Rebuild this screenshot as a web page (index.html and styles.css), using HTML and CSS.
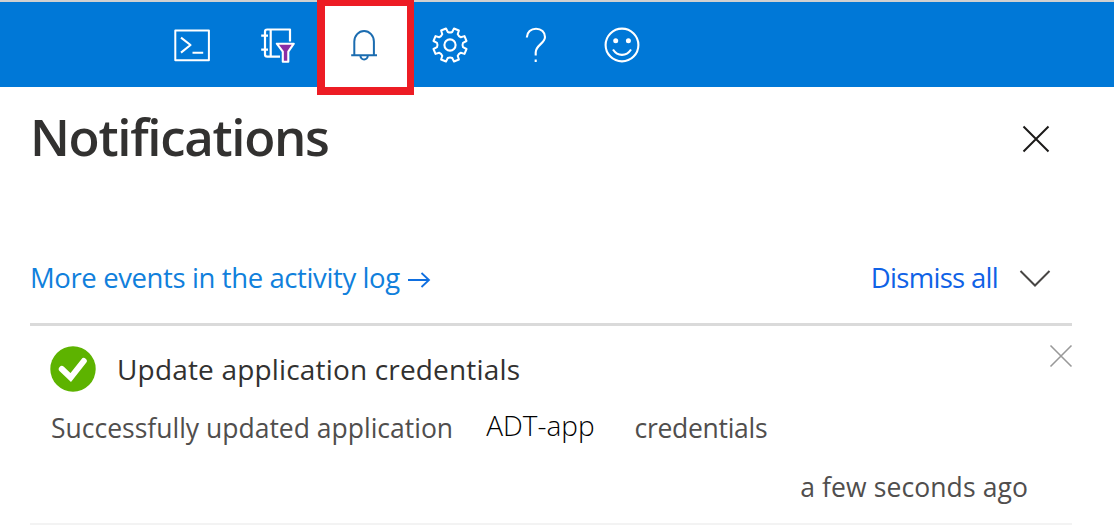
FILE: index.html
```html
<!DOCTYPE html>
<html lang="en">
<head>
<meta charset="utf-8">
<title>Notifications</title>
<link rel="stylesheet" href="styles.css">
</head>
<body>
<header class="topbar">
  <nav class="tools">
    <button class="tool" aria-label="Cloud Shell">
      <svg class="icon" viewBox="-20 -20 40 40"><rect x="-16.7" y="-14.4" width="33.6" height="29.6" stroke-width="2"/><path d="M-11-7.3 -1.5 0 -11 7.6M.5 7.8H11.2" stroke-width="2.1"/></svg>
    </button>
    <button class="tool" aria-label="Directories and subscriptions">
      <svg class="icon" viewBox="-20 -20 40 40"><path d="M12-3.5V-15.5H-10.8Q-13-15.5-13-13.3V9.5Q-13 11.7-10.8 11.7H2M-7.3-15.5V11.7M-16.8-9.3H-10M-16.8 4.6H-10" stroke-width="2.2"/><path class="funnel" d="M-1.2-1.3H15.8L10.3 6.7V16.7H4.8V6.7Z" stroke-width="2.1"/></svg>
    </button>
    <button class="tool tool-active" aria-label="Notifications">
      <svg class="icon" viewBox="-20 -20 40 40"><path d="M-9.7 9.5V-3.5A9.8 10.5 0 0 1 9.9-3.5V9.5M-12.8 10.2H13M-3.6 10.5A3.7 4 0 0 0 3.8 10.5" stroke-width="2"/></svg>
      <span class="highlight"></span>
    </button>
    <button class="tool" aria-label="Settings">
      <svg class="icon" viewBox="-20 -20 40 40"><path d="M-2.2-13 Q0-12 2.2-13L4-16.5 8.9-14.5 7.7-10.8Q8.6-8.6 10.8-7.7L14.5-8.9 16.5-4 13-2.2Q12 0 13 2.2L16.5 4 14.5 8.9 10.8 7.7Q8.6 8.6 7.7 10.8L8.9 14.5 4 16.5 2.2 13Q0 12-2.2 13L-4 16.5-8.9 14.5-7.7 10.8Q-8.6 8.6-10.8 7.7L-14.5 8.9-16.5 4-13 2.2Q-12 0-13-2.2L-16.5-4-14.5-8.9-10.8-7.7Q-8.6-8.6-7.7-10.8L-8.9-14.5-4-16.5Z" stroke-width="2"/><circle r="5.6" stroke-width="2.1"/></svg>
    </button>
    <button class="tool" aria-label="Help">
      <svg class="icon" viewBox="-20 -20 40 40"><path d="M-9.2-7.5C-9-13-5-16.3 0-16.3C5.3-16.3 9-13 9-8C9-1.5-.3 0-.3 7.5V10.5M-.3 14.6V17" stroke-width="2.1"/></svg>
    </button>
    <button class="tool" aria-label="Feedback">
      <svg class="icon" viewBox="-20 -20 40 40"><circle r="16.4" stroke-width="2.1"/><circle class="eye" cx="-6.3" cy="-4.3" r="2.5"/><circle class="eye" cx="6.4" cy="-4.3" r="2.5"/><path d="M-9 4.5Q-5.5 9.9 0 9.9T9 4.5" stroke-width="2.1"/></svg>
    </button>
  </nav>
</header>
<main class="panel">
  <div class="title-row">
    <h1 class="title">Notifications</h1>
    <svg class="close" viewBox="0 0 28 28"><path d="M1.5 1.5 26.5 26.5M26.5 1.5 1.5 26.5"/></svg>
  </div>
  <div class="actions">
    <a class="link">More events in the activity log</a>
    <svg class="arrow" viewBox="0 0 24 18"><path d="M1 9H22M14.5 2 22 9 14.5 16"/></svg>
    <a class="dismiss">Dismiss all</a>
    <svg class="chevron" viewBox="0 0 32 20"><path d="M1.5 2 16 16.5 30.5 2"/></svg>
  </div>
  <article class="item">
    <div class="item-head">
      <svg class="check" viewBox="0 0 46 46"><circle cx="23" cy="23" r="22.7"/><path d="M11.8 23 20.7 31.5 33.8 15"/></svg>
      <h2 class="item-title">Update application credentials</h2>
      <svg class="item-close" viewBox="0 0 24 24"><path d="M1.5 1.5 22.5 22.5M22.5 1.5 1.5 22.5"/></svg>
    </div>
    <p class="message"><span class="msg-start">Successfully updated application</span><span class="app-name">ADT-app</span><span class="msg-end">credentials</span></p>
    <p class="time"><span class="time-text">a few seconds ago</span></p>
  </article>
</main>
</body>
</html>
```
FILE: styles.css
```css
* { box-sizing: border-box; }
body {
  margin: 0;
  height: 525px;
  overflow: hidden;
  background: #fff;
  color: #323130;
  font-family: "Open Sans", "Noto Sans", sans-serif;
  font-size: 27.5px;
}
h1, h2, p { margin: 0; font-weight: 400; white-space: nowrap; }
svg { display: block; fill: none; flex: none; }
.topbar { height: 87px; background: #0078d7; border-top: 2px solid #d0d0d0; }
.tools { display: flex; height: 85px; padding-left: 149px; }
.tool {
  position: relative;
  display: flex;
  align-items: center;
  justify-content: center;
  width: 86px;
  padding: 0;
  border: 0;
  background: none;
  color: #fff;
}
.tool-active { background: #fff; color: #1b6cb0; }
.icon { width: 40px; height: 40px; stroke: currentColor; stroke-linejoin: round; }
.funnel { fill: #8a2da5; }
.eye { fill: #fff; stroke: none; }
.highlight {
  position: absolute;
  left: -4px;
  top: -2px;
  width: 97px;
  height: 95px;
  border: 8px solid #ed1c24;
  border-top-width: 6px;
  border-right-width: 7px;
}
.panel { padding: 0 42px 0 30px; }
.title-row { display: flex; height: 156px; padding: 13px 22px 0 0; justify-content: space-between; }
.title { font-size: 51px; line-height: 72px; font-weight: 600; letter-spacing: -1.33px; }
.close { width: 28px; height: 28px; margin-top: 25px; stroke: #1b1a19; stroke-width: 2; }
.actions { display: flex; align-items: center; height: 83px; padding: 0 21px 11px 0; border-bottom: 3px solid #dadada; }
.link { color: #1080dc; letter-spacing: -0.39px; }
.arrow { width: 24px; height: 18px; margin: 5px 0 0 7px; stroke: #0f6fe0; stroke-width: 1.8; }
.dismiss { margin-left: auto; color: #0f62e6; letter-spacing: -0.7px; }
.chevron { width: 32px; height: 20px; margin: 2px 0 0 21px; stroke: #484644; stroke-width: 2; }
.item { height: 199px; border-bottom: 2px solid #f3f3f3; }
.item-head { display: flex; height: 73px; padding: 20px 0 0 20px; }
.check { width: 46px; height: 46px; }
.check circle { fill: #5db300; }
.check path { stroke: #fff; stroke-width: 6; stroke-linecap: round; }
.item-title { margin-left: 21px; font-size: 28px; line-height: 46px; letter-spacing: 0.17px; }
.item-close { width: 24px; height: 24px; margin: -2px -1px 0 auto; stroke: #999; stroke-width: 1.6; }
.message { display: flex; height: 58px; padding-left: 21px; line-height: 58px; color: #504e4d; font-size: 26.5px; letter-spacing: 0; }
.app-name { margin-left: 33px; color: #000; font-weight: 300; line-height: 52px; font-size: 28px; }
.msg-end { margin-left: 40px; letter-spacing: -0.3px; }
.time { padding-right: 44px; text-align: right; line-height: 60px; color: #504e4d; font-size: 26.5px; letter-spacing: 0.1px; }
```
